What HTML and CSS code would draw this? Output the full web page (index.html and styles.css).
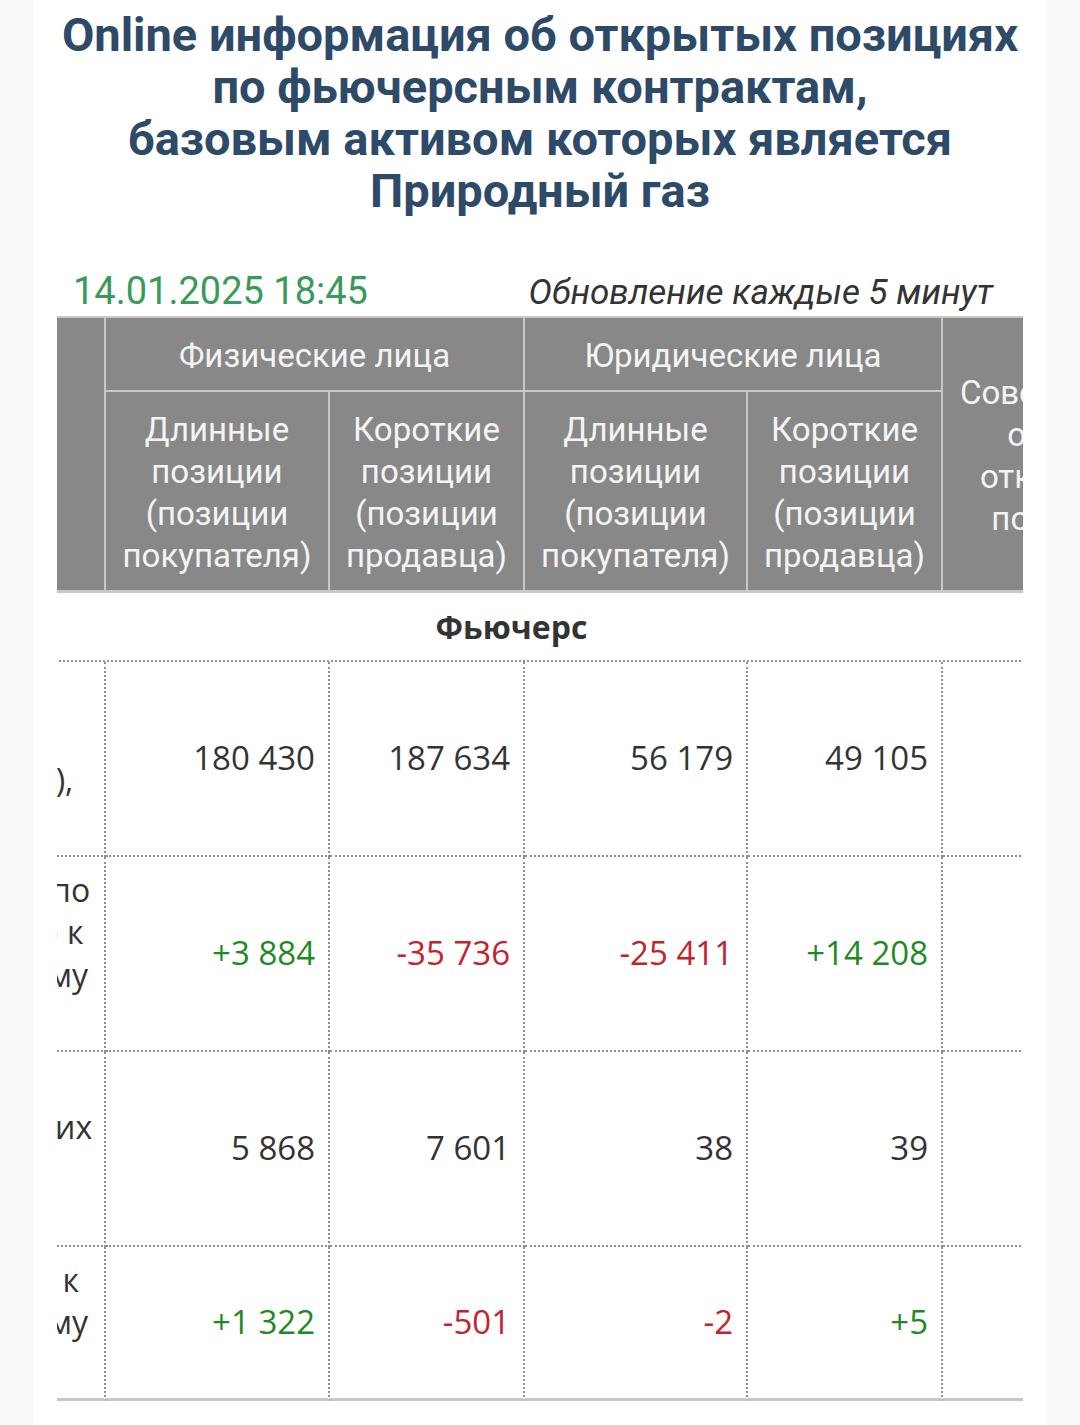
FILE: index.html
```html
<!DOCTYPE html>
<html lang="ru">
<head>
<meta charset="utf-8">
<title>Открытые позиции — Природный газ</title>
<link rel="stylesheet" href="styles.css">
</head>
<body>
<div class="panel">
  <h1 class="title">Online информация об открытых позициях<br>по фьючерсным контрактам,<br>базовым активом которых является<br>Природный газ</h1>
  <div class="meta">
    <span class="date">14.01.2025 18:45</span>
    <span class="update">Обновление каждые 5 минут</span>
  </div>
  <div class="scroll" id="scroll">
    <table class="positions">
      <colgroup>
        <col class="c0"><col class="c1"><col class="c2"><col class="c3"><col class="c4"><col class="c5">
      </colgroup>
      <thead>
        <tr>
          <th rowspan="2" class="h-empty"></th>
          <th colspan="2" class="h-group">Физические лица</th>
          <th colspan="2" class="h-group">Юридические лица</th>
          <th rowspan="2" class="h-total">Совокупный<br>объем<br>открытых<br>позиций</th>
        </tr>
        <tr>
          <th class="h-sub">Длинные<br>позиции<br>(позиции<br>покупателя)</th>
          <th class="h-sub">Короткие<br>позиции<br>(позиции<br>продавца)</th>
          <th class="h-sub">Длинные<br>позиции<br>(позиции<br>покупателя)</th>
          <th class="h-sub">Короткие<br>позиции<br>(позиции<br>продавца)</th>
        </tr>
      </thead>
      <tbody>
        <tr><td colspan="6" class="section">Фьючерс</td></tr>
        <tr>
          <td class="label">Открытые<br>позиции<br>(контракты),<br>шт.</td>
          <td class="num">180 430</td>
          <td class="num">187 634</td>
          <td class="num">56 179</td>
          <td class="num">49 105</td>
          <td class="num">473 348</td>
        </tr>
        <tr>
          <td class="label">Изменение по<br>отношению к<br>предыдущему<br>дню</td>
          <td class="num up">+3 884</td>
          <td class="num down">-35 736</td>
          <td class="num down">-25 411</td>
          <td class="num up">+14 208</td>
          <td class="num down">-21 527</td>
        </tr>
        <tr>
          <td class="label">Число<br>лиц, имеющих<br>открытые<br>позиции</td>
          <td class="num">5 868</td>
          <td class="num">7 601</td>
          <td class="num">38</td>
          <td class="num">39</td>
          <td class="num">13 546</td>
        </tr>
        <tr class="last">
          <td class="label">Изменение к<br>предыдущему<br>дню</td>
          <td class="num up">+1 322</td>
          <td class="num down">-501</td>
          <td class="num down">-2</td>
          <td class="num up">+5</td>
          <td class="num up">+824</td>
        </tr>
      </tbody>
    </table>
  </div>
</div>
<script src="script.js"></script>
</body>
</html>
```

FILE: styles.css
```css
html, body {
  margin: 0;
  padding: 0;
}
body {
  background: #f9f9f9;
  font-family: "Open Sans", "Noto Sans", sans-serif;
  color: #333;
}
.panel {
  margin: 0 34px 0 33px;
  min-height: 1425px;
  background: #ffffff;
  padding: 0 23px 0 24px;
  box-sizing: border-box;
}
.title {
  margin: 0;
  padding-top: 9px;
  font-family: "Roboto", sans-serif;
  font-weight: 700;
  font-size: 47px;
  line-height: 52px;
  text-align: center;
  color: #2d4a69;
}
.meta {
  display: flex;
  justify-content: space-between;
  align-items: baseline;
  margin-top: 52px;
  padding: 0 30px 0 16px;
  height: 47px;
}
.date {
  font-family: "Roboto", sans-serif;
  font-size: 38px;
  color: #3a9a5b;
}
.update {
  font-family: "Roboto", sans-serif;
  font-style: italic;
  font-size: 35px;
  color: #333;
}
.scroll {
  overflow: hidden;
  width: 100%;
}
.positions {
  table-layout: fixed;
  width: 1323px;
  border-collapse: separate;
  border-spacing: 0;
}
.c0 { width: 256px; }
.c1 { width: 224px; }
.c2 { width: 195px; }
.c3 { width: 223px; }
.c4 { width: 195px; }
.c5 { width: 230px; }

.positions th {
  background: #888888;
  color: #f4f4f4;
  font-family: "Roboto", sans-serif;
  font-weight: 400;
  font-size: 33px;
  line-height: 42px;
  text-align: center;
  border-right: 2px solid #c8c8c8;
  border-bottom: 2px solid #c8c8c8;
  padding: 17px 4px 13px;
}
.positions thead tr:first-child th {
  border-top: 2px solid #c8c8c8;
}
.positions .h-sub,
.positions .h-empty,
.positions .h-total {
  border-bottom-width: 3px;
}
.positions td {
  padding: 11.5px 13px 11.5px 14px;
  font-size: 33px;
  line-height: 42.5px;
  border-right: 2px dotted #8f8f8f;
  border-bottom: 2px dotted #8f8f8f;
  vertical-align: middle;
}
.positions td.section {
  border-right: none;
  text-align: center;
  font-weight: 700;
  font-size: 32px;
  line-height: 42px;
  padding: 13px 0 12px;
}
.positions td.label {
  text-align: center;
  font-size: 32px;
  color: #333;
  padding-left: 4px;
  padding-right: 3px;
  white-space: nowrap;
}
.positions td.num {
  text-align: right;
  color: #333;
}
.positions td.up { color: #1f8a23; }
.positions td.down { color: #c4232b; }
.positions tr.last td {
  border-bottom: 3px solid #c8c8c8;
}
```

FILE: script.js
```js
document.getElementById('scroll').scrollLeft = 207;
```
